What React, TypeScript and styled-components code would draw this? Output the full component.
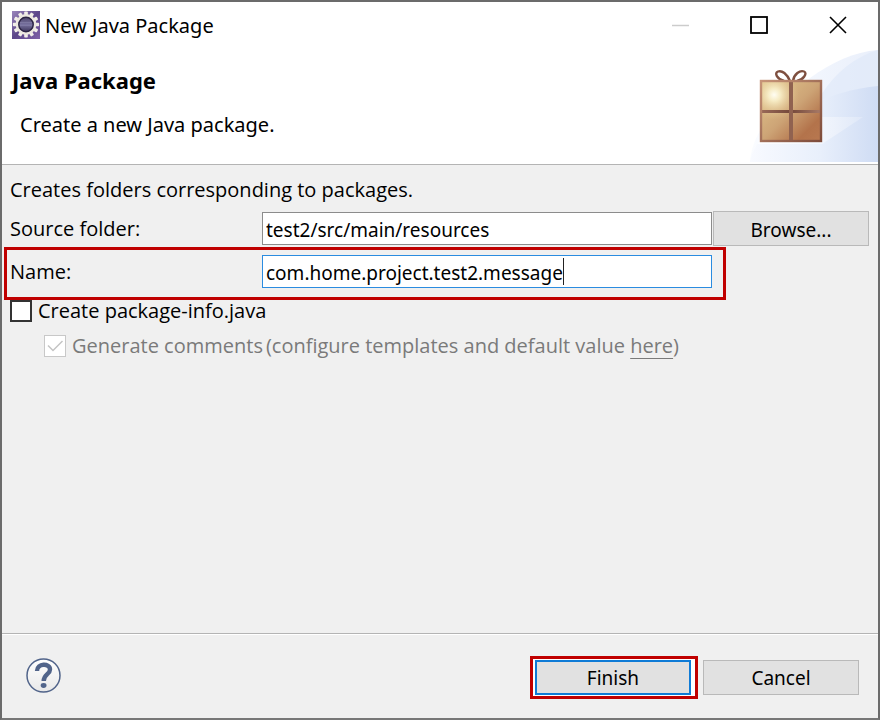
import React, { useLayoutEffect, useRef, useState } from "react";
import styled, { createGlobalStyle } from "styled-components";

const GlobalStyle = createGlobalStyle`
  *, *::before, *::after { box-sizing: border-box; }
  body { margin: 0; background: #f0f0f0; }
  body, button, input { font-family: "Noto Sans", "Open Sans", sans-serif; font-size: 19px; line-height: 28px; color: #000; }
`;

const Dialog = styled.main`
  min-height: 100vh;
  display: flex;
  flex-direction: column;
  border: 2px solid #6b6b6b;
  border-bottom-color: #777;
  background: #f0f0f0;
`;

const TitleBar = styled.header`
  display: flex;
  align-items: center;
  height: 48px;
  padding: 0 1px 2px 10px;
  background: #fff;
`;

const TitleText = styled.span`
  flex: 1;
  padding: 2px 0 0 5px;
  font-size: 20px;
`;

const WindowButton = styled.button`
  width: 79px;
  height: 46px;
  padding: 0;
  border: 0;
  background: none;
  display: grid;
  place-items: center;
  color: #000;
  &:disabled { color: #ccc; }
`;

const Banner = styled.section`
  display: flex;
  justify-content: space-between;
  height: 115px;
  padding-left: 10px;
  background: #fff;
  border-bottom: 1px solid #b4b4b4;
`;

const BannerText = styled.div`
  padding-top: 16px;
`;

const Heading = styled.h1`
  margin: 0;
  font-size: 22px;
  line-height: 28px;
  font-weight: 700;
`;

const Description = styled.p`
  margin: 17px 0 0 8px;
  font-size: 20px;
`;

const Form = styled.form`
  flex: 1;
  display: flex;
  flex-direction: column;
`;

const Body = styled.div`
  flex: 1;
  padding: 11px 9px 0 8px;
  p, label, span {
    font-family: "Open Sans", "Noto Sans", sans-serif;
    font-size: 20px;
  }
`;

const Intro = styled.p`
  margin: 0 0 7px;
`;

const FieldRow = styled.div`
  position: relative;
  display: grid;
  grid-template-columns: 252px 1fr 156px;
  align-items: center;
  min-height: 35px;
  margin-bottom: 8px;
`;

const RowHighlight = styled.div`
  position: absolute;
  z-index: 1;
  inset: -7px 143px -11px -6px;
  border: 3px solid #c00000;
  pointer-events: none;
`;

const FieldBox = styled.div`
  position: relative;
  margin-right: 1px;
`;

const TextField = styled.input<{ $active?: boolean }>`
  display: block;
  width: 100%;
  height: 33px;
  padding: 2px 3px 0;
  border: 1px solid ${(p) => (p.$active ? "#2b8ce0" : "#8c8c8c")};
  border-radius: 0;
  outline: 0;
  background: #fff;
  caret-color: transparent;
`;

const Caret = styled.span`
  position: absolute;
  top: 3px;
  width: 1px;
  height: 27px;
  background: #222;
`;

const PushButton = styled.button<{ $primary?: boolean }>`
  width: 156px;
  height: 35px;
  padding: 2px 0 0;
  border: ${(p) => (p.$primary ? "2px solid #0f7bd6" : "1px solid #b9b9b9")};
  border-radius: 0;
  background: #e1e1e1;
`;

const Options = styled.div`
  margin-top: -4px;
`;

const CheckRow = styled.div<{ $nested?: boolean }>`
  display: flex;
  align-items: center;
  height: 36px;
  margin-top: -1px;
  margin-left: ${(p) => (p.$nested ? "34px" : "0")};
  color: ${(p) => (p.$nested ? "#7a7a7a" : "#000")};
`;

const CheckBox = styled.input`
  appearance: none;
  width: 22px;
  height: 22px;
  margin: 0 6px 0 0;
  border: 2px solid #333;
  background: #fff;
  &:disabled {
    border: 1px solid #c8c8c8;
    background: #fff
      url("data:image/svg+xml,%3Csvg xmlns='http://www.w3.org/2000/svg' viewBox='0 0 20 20'%3E%3Cpath d='M3 9.5l5 5L17.5 5' fill='none' stroke='%23c4c4c4' stroke-width='1.5'/%3E%3C/svg%3E")
      center / 20px no-repeat;
  }
`;

const Config = styled.span`
  margin-left: 3px;
`;

const HereLink = styled.a`
  color: inherit;
  text-decoration: underline 1px;
  text-underline-offset: 5px;
  text-decoration-skip-ink: none;
`;

const Footer = styled.footer`
  display: flex;
  align-items: center;
  justify-content: space-between;
  min-height: 85px;
  padding: 2px 19px 0 24px;
  border-top: 1px solid #b4b4b4;
  box-shadow: inset 0 1px #fff;
`;

const HelpButton = styled.button`
  width: 35px;
  height: 35px;
  padding: 0;
  margin-bottom: 4px;
  border: 0;
  background: none;
  svg { display: block; }
`;

const Actions = styled.div`
  display: flex;
  align-items: center;
  gap: 5px;
`;

const FinishFrame = styled.div`
  padding: 1px 4px 1px 2px;
  border: 3px solid #c00000;
  background: #fff;
`;

const GearIcon = () => {
  const teeth = Array.from({ length: 12 }, (_, i) => i * 30);
  return (
    <svg width="28" height="28" viewBox="0 0 28 28" aria-hidden="true">
      <defs>
        <linearGradient id="tile" x1="0" y1="0" x2="1" y2="1">
          <stop offset="0" stopColor="#9a86bb" />
          <stop offset="0.5" stopColor="#5c4689" />
          <stop offset="1" stopColor="#8063a8" />
        </linearGradient>
        <linearGradient id="core" x1="0" y1="0" x2="0" y2="1">
          <stop offset="0" stopColor="#453c60" />
          <stop offset="0.5" stopColor="#77719e" />
          <stop offset="1" stopColor="#30284c" />
        </linearGradient>
      </defs>
      <rect width="28" height="28" fill="url(#tile)" />
      <g fill="#f1eee8">
        {teeth.map((a) => (
          <rect key={a} x="12.2" y="0.4" width="3.6" height="5" rx="0.8" transform={`rotate(${a} 14 13.5)`} />
        ))}
      </g>
      <circle cx="14" cy="13.5" r="9" fill="url(#core)" stroke="#ece8e0" strokeWidth="2.8" />
      <circle cx="14" cy="13.5" r="7.2" fill="none" stroke="#2c2544" strokeWidth="1.4" />
      <path d="M8 11.500h12M8 14.500h12" stroke="#8d88ae" strokeWidth="0.5" />
    </svg>
  );
};

const PackageArt = () => (
  <svg width="130" height="114" viewBox="0 0 130 114" aria-hidden="true">
    <defs>
      <linearGradient id="sweep" x1="0" y1="0" x2="1" y2="0">
        <stop offset="0" stopColor="#f8faff" />
        <stop offset="0.55" stopColor="#e8effb" />
        <stop offset="1" stopColor="#cfdcf4" />
      </linearGradient>
      <linearGradient id="halo" x1="0" y1="0" x2="1" y2="0">
        <stop offset="0" stopColor="#fafcff" />
        <stop offset="1" stopColor="#e9effb" />
      </linearGradient>
      <linearGradient id="wedge" x1="0" y1="0" x2="1" y2="0">
        <stop offset="0" stopColor="#fff" stopOpacity="0.8" />
        <stop offset="1" stopColor="#fff" stopOpacity="0.2" />
      </linearGradient>
      <linearGradient id="box" x1="0" y1="0" x2="1" y2="1">
        <stop offset="0" stopColor="#e4c98f" />
        <stop offset="0.5" stopColor="#cda476" />
        <stop offset="0.8" stopColor="#b3734b" />
        <stop offset="1" stopColor="#b87850" />
      </linearGradient>
      <radialGradient id="shine" cx="0.22" cy="0.23" r="0.42">
        <stop offset="0" stopColor="#fffdf2" />
        <stop offset="0.25" stopColor="#f6ebc4" />
        <stop offset="1" stopColor="#dfbd85" stopOpacity="0" />
      </radialGradient>
      <linearGradient id="edge" x1="0" y1="0" x2="1" y2="1">
        <stop offset="0" stopColor="#c79478" />
        <stop offset="1" stopColor="#7d4b3a" />
      </linearGradient>
      <linearGradient id="band" x1="0" y1="0" x2="1" y2="0">
        <stop offset="0" stopColor="#9a6a58" />
        <stop offset="0.5" stopColor="#74483a" />
        <stop offset="1" stopColor="#a87a67" />
      </linearGradient>
    </defs>
    <path d="M2 112C3 88 22 58 62 28C84 12 106 2 130 0V112Z" fill="url(#halo)" />
    <path d="M50 112C55 65 82 14 130 0V112Z" fill="#dde7f8" opacity="0.6" />
    <path d="M2 112C8 76 70 42 130 36V112Z" fill="url(#sweep)" />
    <path d="M20 67H115L74 94H10Z" fill="url(#wedge)" />
    <g fill="none" stroke="#7e4f3f" strokeWidth="2.4">
      <path d="M42 31C39 24 34 20 30 21.500C26 23 29 29 36 31" />
      <path d="M45 31C46 24 52 20 56 21.500C60 23 55 30 49 31" />
    </g>
    <rect x="13" y="31" width="60" height="60" fill="url(#box)" />
    <rect x="13" y="31" width="60" height="60" fill="url(#shine)" />
    <rect x="13" y="60" width="60" height="3" fill="url(#band)" />
    <rect x="41" y="31" width="4" height="60" fill="#906250" />
    <rect x="13" y="31" width="60" height="60" fill="none" stroke="url(#edge)" strokeWidth="2.4" />
  </svg>
);

const HelpIcon = () => (
  <svg width="35" height="35" viewBox="0 0 35 35" aria-hidden="true">
    <defs>
      <linearGradient id="glass" x1="0" y1="0" x2="0" y2="1">
        <stop offset="0" stopColor="#fff" />
        <stop offset="1" stopColor="#e8e8e8" />
      </linearGradient>
    </defs>
    <circle cx="17.5" cy="17.5" r="16.5" fill="url(#glass)" stroke="#51648a" strokeWidth="1.5" />
    <path d="M11 13C11 5 24 5 24 11.500C24 16.500 17.700 16 17.700 23" fill="none" stroke="#51648a" strokeWidth="4.4" />
    <ellipse cx="17.600" cy="27.500" rx="2.900" ry="2.400" fill="#51648a" />
  </svg>
);

export default function App() {
  const [folder, setFolder] = useState("test2/src/main/resources");
  const [name, setName] = useState("com.home.project.test2.message");
  const [createInfo, setCreateInfo] = useState(false);
  const [caretX, setCaretX] = useState(0);
  const nameRef = useRef<HTMLInputElement>(null);

  useLayoutEffect(() => {
    const input = nameRef.current;
    const ctx = document.createElement("canvas").getContext("2d");
    if (!input || !ctx) return;
    const style = getComputedStyle(input);
    ctx.font = `${style.fontSize} ${style.fontFamily}`;
    setCaretX(Math.round(ctx.measureText(name).width) + 4);
  }, [name]);

  return (
    <>
      <GlobalStyle />
      <Dialog>
        <TitleBar>
          <GearIcon />
          <TitleText>New Java Package</TitleText>
          <WindowButton type="button" aria-label="Minimize" disabled>
            <svg width="18" height="18"><path d="M1 9.500H18" stroke="currentColor" strokeWidth="1.5" /></svg>
          </WindowButton>
          <WindowButton type="button" aria-label="Maximize">
            <svg width="18" height="18"><rect x="1" y="1" width="16" height="16" fill="none" stroke="currentColor" strokeWidth="1.8" /></svg>
          </WindowButton>
          <WindowButton type="button" aria-label="Close">
            <svg width="18" height="18"><path d="M1 1L17 17M17 1L1 17" stroke="currentColor" strokeWidth="1.6" /></svg>
          </WindowButton>
        </TitleBar>
        <Banner>
          <BannerText>
            <Heading>Java Package</Heading>
            <Description>Create a new Java package.</Description>
          </BannerText>
          <PackageArt />
        </Banner>
        <Form onSubmit={(e) => e.preventDefault()}>
          <Body>
            <Intro>Creates folders corresponding to packages.</Intro>
            <FieldRow>
              <label htmlFor="folder">Source folder:</label>
              <FieldBox>
                <TextField id="folder" value={folder} onChange={(e) => setFolder(e.target.value)} />
              </FieldBox>
              <PushButton type="button">Browse...</PushButton>
            </FieldRow>
            <FieldRow>
              <label htmlFor="name">Name:</label>
              <FieldBox>
                <TextField id="name" ref={nameRef} $active value={name} onChange={(e) => setName(e.target.value)} />
                <Caret style={{ left: caretX }} />
              </FieldBox>
              <RowHighlight />
            </FieldRow>
            <Options>
              <CheckRow>
                <CheckBox id="info" type="checkbox" checked={createInfo} onChange={(e) => setCreateInfo(e.target.checked)} />
                <label htmlFor="info">Create package-info.java</label>
              </CheckRow>
              <CheckRow $nested>
                <CheckBox id="comments" type="checkbox" checked disabled readOnly />
                <label htmlFor="comments">Generate comments</label>
                <Config>
                  (configure templates and default value <HereLink href="#templates">here</HereLink>)
                </Config>
              </CheckRow>
            </Options>
          </Body>
          <Footer>
            <HelpButton type="button" aria-label="Help"><HelpIcon /></HelpButton>
            <Actions>
              <FinishFrame>
                <PushButton type="submit" $primary>Finish</PushButton>
              </FinishFrame>
              <PushButton type="button">Cancel</PushButton>
            </Actions>
          </Footer>
        </Form>
      </Dialog>
    </>
  );
}
